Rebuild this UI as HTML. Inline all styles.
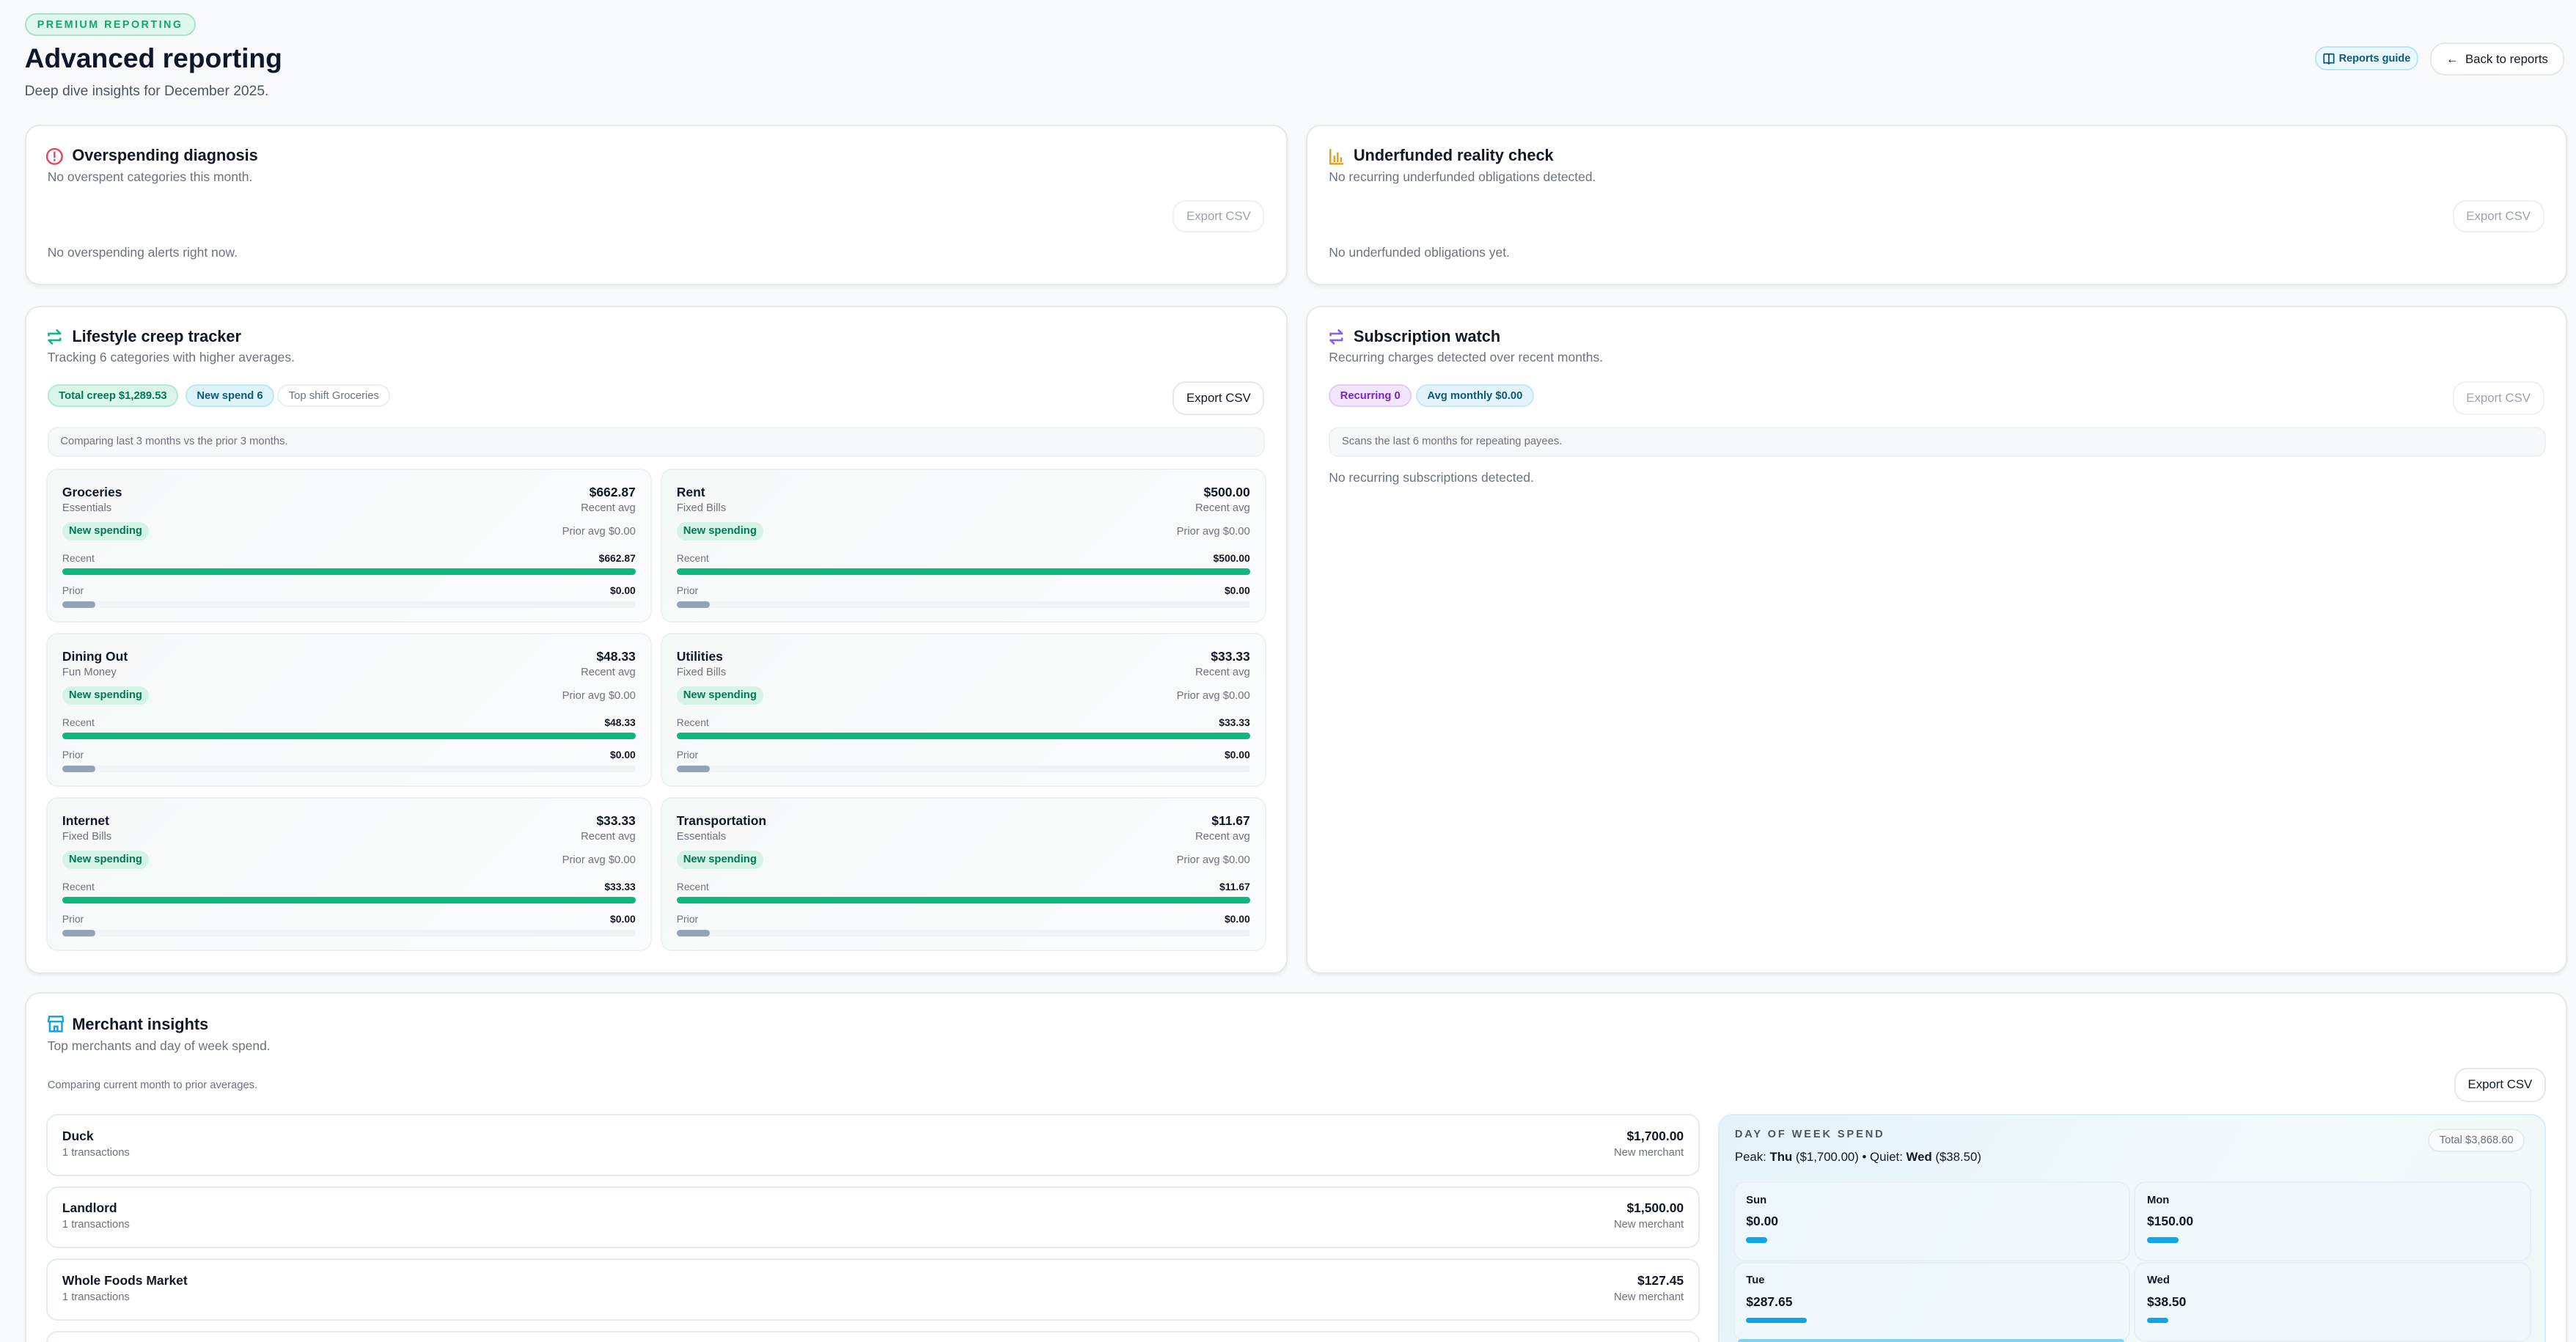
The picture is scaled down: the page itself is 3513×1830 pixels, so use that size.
<!DOCTYPE html>
<html><head><meta charset="utf-8"><style>
html,body{margin:0;padding:0;width:3513px;height:1830px;overflow:hidden;background:#f7f9fa}
#r{zoom:2.2404;width:1568px;height:817px;position:relative;font-family:"Liberation Sans",sans-serif;color:#111827}
.a{position:absolute}
.card{position:absolute;background:#fff;border:1px solid #e5e9ec;border-radius:9px;box-shadow:0 1px 2px rgba(0,0,0,.05)}
.t{position:absolute;font-size:9.7px;font-weight:bold;white-space:nowrap}
.s{position:absolute;font-size:7.8px;color:#6b7280;white-space:nowrap}
.btn{position:absolute;border:1px solid #eef0f2;border-radius:8px;font-size:7.5px;color:#9ca3af;display:flex;align-items:center;justify-content:center;background:#fff}
.chip{position:absolute;height:14px;border-radius:7px;font-size:6.6px;display:flex;align-items:center;padding:0 6px;box-sizing:border-box;white-space:nowrap}
.info{position:absolute;background:#f6f8f9;border:1px solid #eef1f3;border-radius:6px;font-size:6.6px;color:#6b7280;display:flex;align-items:center;padding-left:7px;box-sizing:border-box}
.cc{position:absolute;width:367px;height:92px;border:1px solid #eef1f3;border-radius:7px;background:linear-gradient(135deg,#f5f9f8,#fafbfc)}
.cc .n{position:absolute;left:9px;top:9px;font-size:7.8px;font-weight:bold}
.cc .v{position:absolute;right:9px;top:9px;font-size:7.8px;font-weight:bold}
.cc .g{position:absolute;font-size:6.6px;color:#6b7280}
.cc .ns{position:absolute;left:9px;top:32px;height:11px;padding:0 4px;border-radius:6px;background:#d5f3e6;color:#047857;font-size:6.6px;font-weight:bold;line-height:11px}
.cc .bar{position:absolute;left:9px;right:9px;height:4px;border-radius:2px}
.cc .lb{position:absolute;left:9px;font-size:6.2px;color:#6b7280}
.cc .lv{position:absolute;right:9px;font-size:6.2px;font-weight:bold}
.mr{position:absolute;left:28px;width:1005px;height:36px;border:1px solid #e3ecee;border-radius:7px;background:#fff}
.mr .n{position:absolute;left:9px;top:8px;font-size:7.8px;font-weight:bold}
.mr .c{position:absolute;left:9px;top:19px;font-size:6.6px;color:#6b7280}
.mr .v{position:absolute;right:9px;top:8px;font-size:7.8px;font-weight:bold}
.mr .m{position:absolute;right:9px;top:19px;font-size:6.6px;color:#6b7280}
.dc{position:absolute;width:240px;height:47px;border:1px solid #e6f0f4;border-radius:7px;background:rgba(240,248,251,.8)}
.dc .d{position:absolute;left:7px;top:7px;font-size:6.6px;font-weight:bold}
.dc .v{position:absolute;left:7px;top:19px;font-size:7.8px;font-weight:bold}
.dc .b{position:absolute;left:7px;top:33px;height:3.5px;border-radius:2px;background:#0ea5e9}
</style></head><body><div id="r">
<div class="a" style="left:15px;top:8px;height:14px;width:104px;border:1px solid #a7e3c8;background:#e0f7ee;border-radius:7px;box-sizing:border-box;font-size:6.4px;letter-spacing:1.1px;color:#10a86a;font-weight:bold;display:flex;align-items:center;justify-content:center">PREMIUM REPORTING</div>
<div class="a" style="left:15px;top:26px;font-size:16.6px;font-weight:bold;color:#0f172a">Advanced reporting</div>
<div class="a" style="left:15px;top:51px;font-size:8.6px;color:#4b5563">Deep dive insights for December 2025.</div>
<div class="a" style="left:1409px;top:28px;width:63px;height:15px;border:1px solid #bae6f2;background:#eaf7fb;border-radius:7px;box-sizing:border-box;font-size:6.5px;color:#0e5a7a;font-weight:bold;display:flex;align-items:center;justify-content:center"><svg width="8" height="8" viewBox="0 0 8 8" style="margin-right:2px"><path d="M1 1.2h2.5c.3 0 .5.2.5.5v5.6M7 1.2H4.5c-.3 0-.5.2-.5.5M1 1.2v5.4h2.5l.5.6.5-.6H7V1.2" fill="none" stroke="#0e5a7a" stroke-width=".8"/></svg>Reports guide</div>
<div class="a" style="left:1479px;top:26px;width:82px;height:20px;border:1px solid #e5e7eb;background:#fff;border-radius:9px;box-sizing:border-box;font-size:7.5px;color:#111827;display:flex;align-items:center;justify-content:center">&#8592;&nbsp; Back to reports</div>

<div class="card" style="left:15px;top:76px;width:767px;height:96px">
<svg class="a" style="left:12px;top:13px" width="11" height="11" viewBox="0 0 12 12"><circle cx="6" cy="6" r="5" fill="none" stroke="#e0485f" stroke-width="1.2"/><path d="M6 3.3v3.2M6 8.3v.4" stroke="#e0485f" stroke-width="1.2" stroke-linecap="round"/></svg>
<div class="t" style="left:28px;top:12px">Overspending diagnosis</div>
<div class="s" style="left:13px;top:26px">No overspent categories this month.</div>
<div class="btn" style="left:698px;top:45px;width:54px;height:18px">Export CSV</div>
<div class="s" style="left:13px;top:72px">No overspending alerts right now.</div>
</div>
<div class="card" style="left:795px;top:76px;width:766px;height:96px">
<svg class="a" style="left:13px;top:13px" width="10" height="11" viewBox="0 0 10 11"><path d="M1 1v9h8" fill="none" stroke="#e0a21b" stroke-width="1.1"/><path d="M3.5 9V5M5.5 9V3M7.5 9V6" stroke="#e0a21b" stroke-width="1.1"/></svg>
<div class="t" style="left:28px;top:12px">Underfunded reality check</div>
<div class="s" style="left:13px;top:26px">No recurring underfunded obligations detected.</div>
<div class="btn" style="left:697px;top:45px;width:54px;height:18px">Export CSV</div>
<div class="s" style="left:13px;top:72px">No underfunded obligations yet.</div>
</div>

<div class="card" style="left:15px;top:186px;width:767px;height:405px">
<svg class="a" style="left:12px;top:12px" width="11" height="12" viewBox="0 0 11 12"><path d="M2 5V4h7L7 2M9 7v1H2l2 2" fill="none" stroke="#10b981" stroke-width="1.2" stroke-linecap="round" stroke-linejoin="round"/></svg>
<div class="t" style="left:28px;top:12px">Lifestyle creep tracker</div>
<div class="s" style="left:13px;top:26px">Tracking 6 categories with higher averages.</div>
<div class="chip" style="left:13px;top:47px;background:#d9f5e8;border:1px solid #b4ead1;color:#047857;font-weight:bold">Total creep $1,289.53</div>
<div class="chip" style="left:97px;top:47px;background:#ddf3fa;border:1px solid #bfe7f3;color:#0e5a7a;font-weight:bold">New spend 6</div>
<div class="chip" style="left:153px;top:47px;background:#fff;border:1px solid #eceef0;color:#6b7280">Top shift Groceries</div>
<div class="btn" style="left:698px;top:45px;width:54px;height:19px;color:#111827;border-color:#e5e7eb">Export CSV</div>
<div class="info" style="left:13px;top:73px;width:741px;height:18px">Comparing last 3 months vs the prior 3 months.</div>
</div>
<div id="grid"></div>

<div class="card" style="left:795px;top:186px;width:766px;height:405px">
<svg class="a" style="left:12px;top:12px" width="11" height="12" viewBox="0 0 11 12"><path d="M2 5V4h7L7 2M9 7v1H2l2 2" fill="none" stroke="#8b5cf6" stroke-width="1.2" stroke-linecap="round" stroke-linejoin="round"/></svg>
<div class="t" style="left:28px;top:12px">Subscription watch</div>
<div class="s" style="left:13px;top:26px">Recurring charges detected over recent months.</div>
<div class="chip" style="left:13px;top:47px;background:#f1e6fc;border:1px solid #e0ccf6;color:#7e22ce;font-weight:bold">Recurring 0</div>
<div class="chip" style="left:66px;top:47px;background:#e2f4fa;border:1px solid #c5e8f3;color:#0e5a7a;font-weight:bold">Avg monthly $0.00</div>
<div class="btn" style="left:697px;top:45px;width:54px;height:19px">Export CSV</div>
<div class="info" style="left:13px;top:73px;width:741px;height:18px">Scans the last 6 months for repeating payees.</div>
<div class="s" style="left:13px;top:99px">No recurring subscriptions detected.</div>
</div>

<div class="card" style="left:15px;top:604px;width:1546px;height:230px">
<svg class="a" style="left:13px;top:13px" width="10" height="11" viewBox="0 0 10 11"><path d="M1 1h8l.6 3H.4z M1.3 4.2V10h7.4V4.2 M4 10V7h2v3" fill="none" stroke="#0ea5e9" stroke-width="1.1"/></svg>
<div class="t" style="left:28px;top:13px">Merchant insights</div>
<div class="s" style="left:13px;top:27px">Top merchants and day of week spend.</div>
<div class="a" style="left:13px;top:52px;font-size:6.6px;color:#6b7280">Comparing current month to prior averages.</div>
<div class="btn" style="left:1478px;top:45px;width:54px;height:19px;color:#111827;border-color:#e5e7eb">Export CSV</div>
</div>
<div class="mr" style="top:678px"><div class="n">Duck</div><div class="c">1 transactions</div><div class="v">$1,700.00</div><div class="m">New merchant</div></div>
<div class="mr" style="top:722px"><div class="n">Landlord</div><div class="c">1 transactions</div><div class="v">$1,500.00</div><div class="m">New merchant</div></div>
<div class="mr" style="top:766px"><div class="n">Whole Foods Market</div><div class="c">1 transactions</div><div class="v">$127.45</div><div class="m">New merchant</div></div>
<div class="mr" style="top:810px"></div>

<div class="a" style="left:1046px;top:678px;width:502px;height:160px;border:1px solid #d8eef5;border-radius:9px;background:linear-gradient(120deg,#e3f3fa,#f4fafc 60%,#eef8f6)"></div>
<div class="a" style="left:1056px;top:687px;font-size:6.5px;letter-spacing:1.3px;color:#4b5563;font-weight:bold">DAY OF WEEK SPEND</div>
<div class="chip" style="left:1478px;top:687px;border:1px solid #e2ecef;color:#6b7280;background:rgba(255,255,255,.5)">Total $3,868.60</div>
<div class="a" style="left:1056px;top:700px;font-size:7.5px;color:#111827">Peak: <b>Thu</b> ($1,700.00) • Quiet: <b>Wed</b> ($38.50)</div>
<div class="dc" style="left:1055px;top:719px"><div class="d">Sun</div><div class="v">$0.00</div><div class="b" style="width:13px"></div></div>
<div class="dc" style="left:1299px;top:719px"><div class="d">Mon</div><div class="v">$150.00</div><div class="b" style="width:19px"></div></div>
<div class="dc" style="left:1055px;top:768px"><div class="d">Tue</div><div class="v">$287.65</div><div class="b" style="width:37px"></div></div>
<div class="dc" style="left:1299px;top:768px"><div class="d">Wed</div><div class="v">$38.50</div><div class="b" style="width:13px"></div></div>
<div class="a" style="left:1058px;top:815px;width:235px;height:4px;border-radius:3px;background:#7dd3f0"></div>

<script>
var d=[["Groceries","Essentials","$662.87"],["Rent","Fixed Bills","$500.00"],["Dining Out","Fun Money","$48.33"],["Utilities","Fixed Bills","$33.33"],["Internet","Fixed Bills","$33.33"],["Transportation","Essentials","$11.67"]];
var h="";d.forEach(function(x,i){var l=i%2?402:28,t=285+Math.floor(i/2)*100;
h+='<div class="cc" style="left:'+l+'px;top:'+t+'px"><div class="n">'+x[0]+'</div><div class="v">'+x[2]+'</div><div class="g" style="left:9px;top:20px">'+x[1]+'</div><div class="g" style="right:9px;top:20px">Recent avg</div><div class="ns">New spending</div><div class="g" style="right:9px;top:34px">Prior avg $0.00</div><div class="lb" style="top:50px">Recent</div><div class="lv" style="top:50px">'+x[2]+'</div><div class="bar" style="top:60px;background:#10b77f"></div><div class="lb" style="top:70px">Prior</div><div class="lv" style="top:70px">$0.00</div><div class="bar" style="top:80px;background:#f1f4f6"></div><div class="bar" style="top:80px;right:auto;width:20px;background:#94a3b8"></div></div>';});
document.getElementById("grid").outerHTML=h;
</script>
</div></body></html>
